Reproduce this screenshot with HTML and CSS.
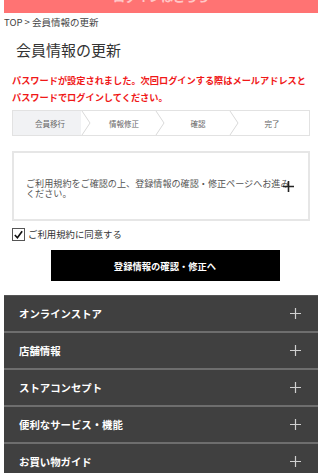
FILE: index.html
```html
<!DOCTYPE html>
<html lang="ja">
<head>
<meta charset="utf-8">
<link rel="stylesheet" href="styles.css">
</head>
<body>
<div class="page">
  <div class="topbar"><span class="topbar-text">ログインはこちら</span></div>
  <div class="breadcrumb">TOP &gt; 会員情報の更新</div>
  <h1 class="title">会員情報の更新</h1>
  <p class="notice">パスワードが設定されました。次回ログインする際はメールアドレスとパスワードでログインしてください。</p>
  <ol class="steps">
    <li class="step active">会員移行<svg class="chev" viewBox="0 0 10 25" width="10" height="25" preserveAspectRatio="none"><polyline points="1,0 9,12.5 1,25" fill="none" stroke="#d8d8d8" stroke-width="1"/></svg></li>
    <li class="step">情報修正<svg class="chev" viewBox="0 0 10 25" width="10" height="25" preserveAspectRatio="none"><polyline points="1,0 9,12.5 1,25" fill="none" stroke="#d8d8d8" stroke-width="1"/></svg></li>
    <li class="step">確認<svg class="chev" viewBox="0 0 10 25" width="10" height="25" preserveAspectRatio="none"><polyline points="1,0 9,12.5 1,25" fill="none" stroke="#d8d8d8" stroke-width="1"/></svg></li>
    <li class="step">完了</li>
  </ol>
  <div class="terms">
    <p class="terms-text">ご利用規約をご確認の上、登録情報の確認・修正ページへお進みください。</p>
    <svg class="terms-plus" viewBox="0 0 11 11" width="11" height="11"><path d="M5.5 0V11M0 5.5H11" stroke="#222" stroke-width="1.6"/></svg>
  </div>
  <label class="agree"><span class="box"><svg viewBox="0 0 12 12" width="11" height="11"><polyline points="2,6.5 4.8,9.5 10,2.5" fill="none" stroke="#111" stroke-width="1.8"/></svg></span>ご利用規約に同意する</label>
  <div class="btn-wrap"><a class="btn">登録情報の確認・修正へ</a></div>
  <ul class="menu">
    <li class="menu-item"><span>オンラインストア</span><svg viewBox="0 0 11 11" width="11" height="11"><path d="M5.5 0V11M0 5.5H11" stroke="#d0d0d0" stroke-width="1.2"/></svg></li>
    <li class="menu-item"><span>店舗情報</span><svg viewBox="0 0 11 11" width="11" height="11"><path d="M5.5 0V11M0 5.5H11" stroke="#d0d0d0" stroke-width="1.2"/></svg></li>
    <li class="menu-item"><span>ストアコンセプト</span><svg viewBox="0 0 11 11" width="11" height="11"><path d="M5.5 0V11M0 5.5H11" stroke="#d0d0d0" stroke-width="1.2"/></svg></li>
    <li class="menu-item"><span>便利なサービス・機能</span><svg viewBox="0 0 11 11" width="11" height="11"><path d="M5.5 0V11M0 5.5H11" stroke="#d0d0d0" stroke-width="1.2"/></svg></li>
    <li class="menu-item"><span>お買い物ガイド</span><svg viewBox="0 0 11 11" width="11" height="11"><path d="M5.5 0V11M0 5.5H11" stroke="#d0d0d0" stroke-width="1.2"/></svg></li>
  </ul>
</div>
</body>
</html>
```
FILE: styles.css
```css
* { box-sizing: border-box; }
html, body { margin: 0; padding: 0; background: #fff; }
body {
  font-family: "Noto Sans CJK JP", "Noto Sans", sans-serif;
  color: #333;
  overflow: hidden;
}
.page { padding: 0 4px; }
.topbar {
  height: 13px;
  background: #ff7373;
  overflow: hidden;
  display: flex;
  justify-content: center;
  align-items: flex-end;
}
.topbar-text {
  color: #fff;
  font-size: 12px;
  font-weight: bold;
  line-height: 12px;
  margin-bottom: 10px;
  opacity: 0.6;
}
.breadcrumb {
  font-size: 9.5px;
  line-height: 14px;
  margin-top: 2px;
  color: #444;
}
.title {
  margin: 10px 0 0 12px;
  font-size: 15px;
  font-weight: normal;
  line-height: 22px;
  color: #333;
}
.notice {
  margin: 11px 8px 0 8px;
  color: #f01818;
  font-size: 9.2px;
  font-weight: bold;
  line-height: 16.5px;
}
.steps {
  list-style: none;
  margin: 5px 8px 0 8px;
  padding: 0;
  display: grid;
  grid-template-columns: repeat(4, 1fr);
  height: 26px;
  border: 1px solid #e2e2e2;
}
.step {
  position: relative;
  display: flex;
  align-items: center;
  justify-content: center;
  font-size: 7.5px;
  color: #666;
}
.step.active {
  background: linear-gradient(to right, #f1f2f4 calc(100% - 6px), #fff calc(100% - 6px));
}
.chev {
  position: absolute;
  right: -4px;
  top: 0;
  height: 100%;
}
.terms {
  margin: 15px 8px 0 8px;
  height: 70px;
  border: 2px solid #e6e6e6;
  position: relative;
  display: flex;
  align-items: center;
  padding: 0 0 0 12px;
}
.terms-text {
  margin: 4px 0 0 0;
  width: 266px;
  font-size: 9.1px;
  line-height: 10px;
  color: #555;
}
.terms-plus {
  position: absolute;
  left: 269px;
  top: 28px;
}
.agree {
  display: flex;
  align-items: center;
  margin: 6px 0 0 8px;
  font-size: 9.4px;
  color: #333;
  line-height: 14px;
}
.box {
  width: 13px;
  height: 13px;
  border: 1px solid #555;
  display: inline-flex;
  align-items: center;
  justify-content: center;
  margin-right: 3px;
  background: #fff;
}
.btn-wrap {
  display: flex;
  justify-content: center;
  margin-top: 9px;
}
.btn {
  width: 229px;
  height: 31px;
  background: #000;
  color: #fff;
  font-size: 9.3px;
  font-weight: bold;
  display: flex;
  align-items: center;
  justify-content: center;
  margin-left: 8px;
}
.menu {
  list-style: none;
  margin: 14px 0 0 0;
  padding: 0;
  background: #404040;
}
.menu-item {
  height: 37px;
  border-top: 2px solid #6e6e6e;
  display: flex;
  align-items: center;
  justify-content: space-between;
  padding: 0 17px 0 15px;
  color: #fff;
  font-size: 10.4px;
  font-weight: bold;
}
.menu-item:first-child { border-top: 1px solid #555; height: 36px; }
```
